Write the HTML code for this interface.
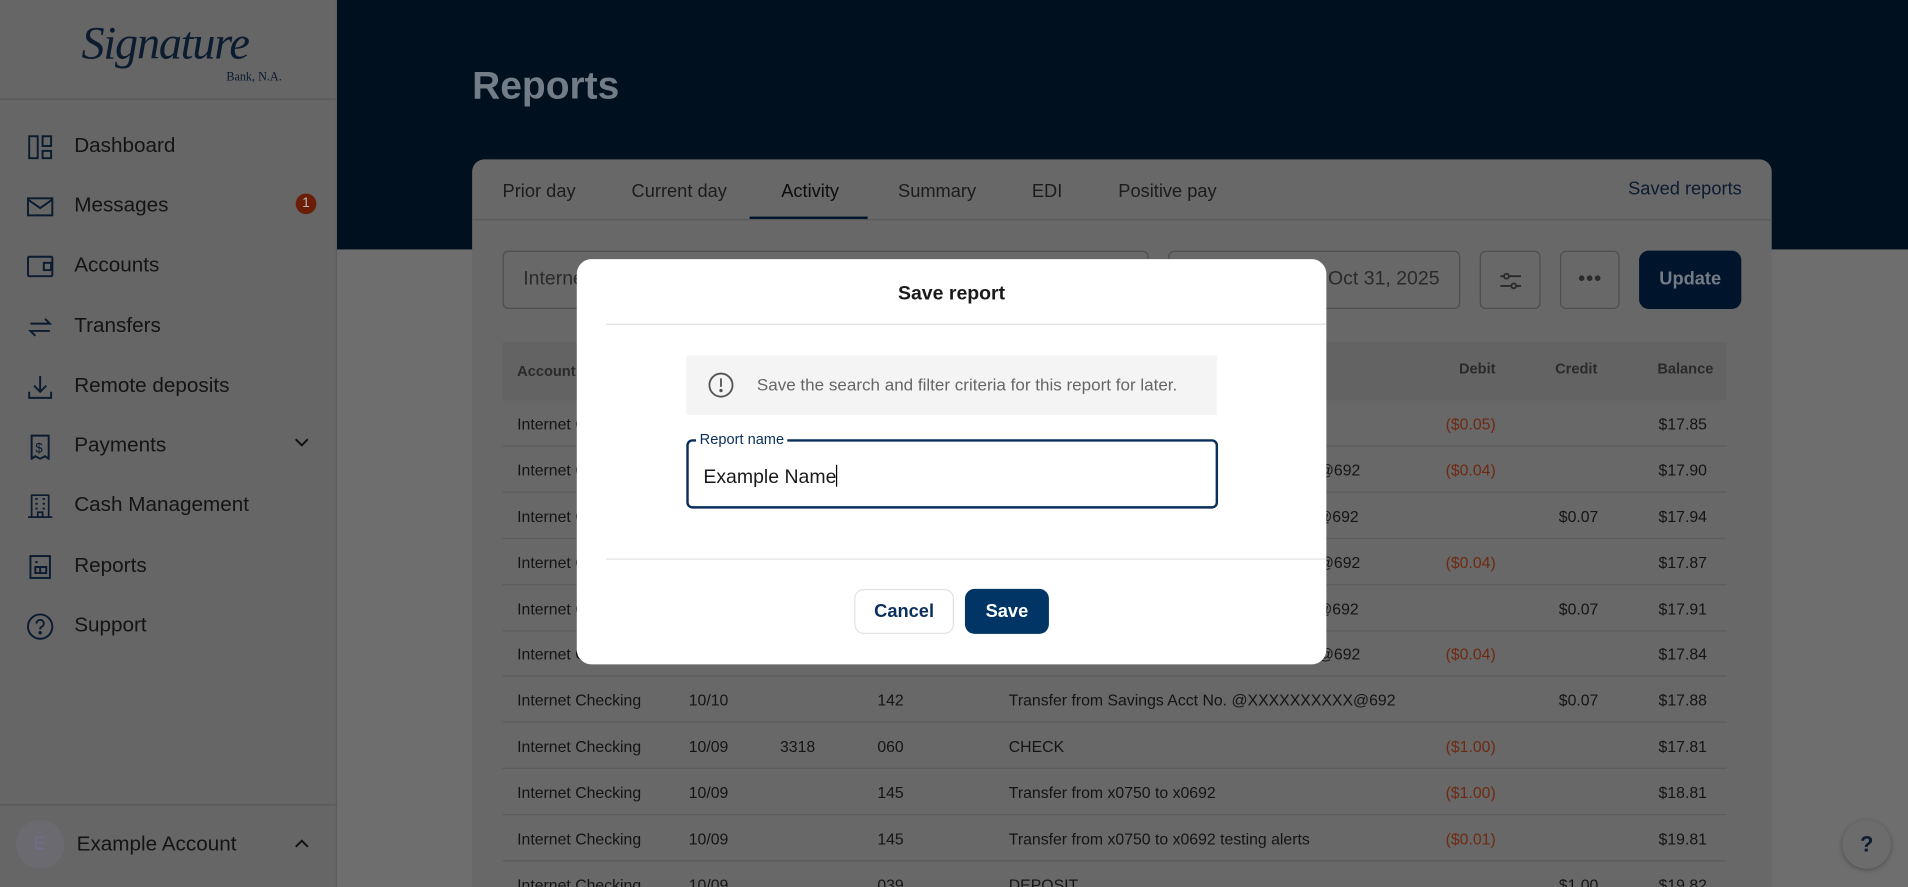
<!DOCTYPE html>
<html><head><meta charset="utf-8"><style>
*{box-sizing:border-box;margin:0;padding:0}
html,body{width:1908px;height:887px;overflow:hidden;background:#686868;font-family:"Liberation Sans",sans-serif}
#w{position:absolute;left:0;top:0;width:1568px;height:729px;transform:scale(1.21684,1.21673);transform-origin:0 0;overflow:hidden;background:#6e6e6e}
.a{position:absolute}
.side{left:0;top:0;width:277px;height:729px;background:#666;border-right:1px solid #5c5c5c}
.nav{position:absolute;left:0;width:277px;height:40px;font-size:17px;color:#141414}
.nav span{position:absolute;left:61px;top:11px}
.nav svg{position:absolute;left:22px;top:11px}
.hdr{left:277px;top:0;width:1291px;height:205px;background:#00101e}
.card{left:388px;top:131px;width:1068px;height:620px;background:#686868;border-radius:10px}
.tab{position:absolute;top:149px;font-size:15px;color:#1c1c1c}
.box{position:absolute;border:1px solid #4e4e4e;border-radius:5px}
.row{position:absolute;left:413px;width:1006px;height:38px;border-bottom:1px solid #5c5c5c;font-size:13px;color:#141414}
.row div{position:absolute;top:12px}
.red{color:#6e2a10}
</style></head><body><div id="w">
<div class="a side">
 <div class="a" style="left:67px;top:14px;font-family:'Liberation Serif',serif;font-style:italic;font-size:38px;color:#0b1b30;letter-spacing:-1px">Signature</div>
 <div class="a" style="left:186px;top:58px;font-family:'Liberation Serif',serif;font-size:10px;color:#0b1b30">Bank, N.A.</div>
 <div class="a" style="left:0;top:81px;width:277px;height:1px;background:#5a5a5a"></div>
 <div class="nav" style="top:99px"><svg width="22" height="22" viewBox="0 0 22 22" fill="none" stroke="#0b1b30" stroke-width="1.6"><rect x="2" y="2" width="7" height="18"/><rect x="13" y="2" width="7" height="8"/><rect x="13" y="14" width="7" height="6"/></svg><span>Dashboard</span></div>
 <div class="nav" style="top:148px"><svg width="22" height="22" viewBox="0 0 22 22" fill="none" stroke="#0b1b30" stroke-width="1.6"><rect x="1" y="4" width="20" height="14"/><path d="M1 5l10 7 10-7"/></svg><span>Messages</span><div class="a" style="left:243px;top:11px;width:17px;height:17px;border-radius:50%;background:#6a1e08;color:#bbb;font-size:11px;text-align:center;line-height:17px">1</div></div>
 <div class="nav" style="top:197px"><svg width="22" height="22" viewBox="0 0 22 22" fill="none" stroke="#0b1b30" stroke-width="1.6"><rect x="1" y="3" width="20" height="16" rx="1"/><rect x="14" y="8" width="6" height="6"/></svg><span>Accounts</span></div>
 <div class="nav" style="top:247px"><svg width="22" height="22" viewBox="0 0 22 22" fill="none" stroke="#0b1b30" stroke-width="1.6"><path d="M3 8h16l-4-4M19 14H3l4 4"/></svg><span>Transfers</span></div>
 <div class="nav" style="top:296px"><svg width="22" height="22" viewBox="0 0 22 22" fill="none" stroke="#0b1b30" stroke-width="1.6"><path d="M11 2v12M6 10l5 5 5-5M2 15v5h18v-5"/></svg><span>Remote deposits</span></div>
 <div class="nav" style="top:345px"><svg width="22" height="22" viewBox="0 0 22 22" fill="none" stroke="#0b1b30" stroke-width="1.6"><path d="M4 2h14v19l-3-2-4 2-4-2-3 2z"/><text x="7" y="16" font-size="11" fill="#0b1b30" stroke="none" font-family="Liberation Sans">$</text></svg><span>Payments</span><svg style="left:240px;top:10px" width="16" height="16" viewBox="0 0 16 16" fill="none" stroke="#111" stroke-width="1.6"><path d="M3 6l5 5 5-5"/></svg></div>
 <div class="nav" style="top:394px"><svg width="22" height="22" viewBox="0 0 22 22" fill="none" stroke="#0b1b30" stroke-width="1.4"><path d="M4 20V2h14v18M1 20h20M9 20v-4h4v4M7 5h2M13 5h2M7 9h2M13 9h2M7 13h2M13 13h2"/></svg><span>Cash Management</span></div>
 <div class="nav" style="top:444px"><svg width="22" height="22" viewBox="0 0 22 22" fill="none" stroke="#0b1b30" stroke-width="1.6"><rect x="3" y="2" width="16" height="18"/><path d="M7 7h2M7 11h9v5H7zM11 11v5"/></svg><span>Reports</span></div>
 <div class="nav" style="top:493px"><svg width="22" height="22" viewBox="0 0 22 22" fill="none" stroke="#0b1b30" stroke-width="1.6"><circle cx="11" cy="11" r="10"/><path d="M8 8.5a3 3 0 1 1 4 2.8c-1 .4-1 1-1 2"/><circle cx="11" cy="16" r=".6" fill="#0b1b30"/></svg><span>Support</span></div>
 <div class="a" style="left:0;top:661px;width:277px;height:1px;background:#5a5a5a"></div>
 <div class="a" style="left:13px;top:674px;width:40px;height:40px;border-radius:50%;background:#6a6a70;color:#6e6e88;font-size:15px;text-align:center;line-height:40px">E</div>
 <div class="a" style="left:63px;top:684px;font-size:17px;color:#141414">Example Account</div>
 <svg class="a" style="left:240px;top:686px" width="16" height="16" viewBox="0 0 16 16" fill="none" stroke="#111" stroke-width="1.6"><path d="M3 10l5-5 5 5"/></svg>
</div>
<div class="a hdr"></div>
<div class="a" style="left:388px;top:52px;font-size:32px;font-weight:bold;color:#737d88">Reports</div>
<div class="a card"></div>
<div class="tab" style="left:413px">Prior day</div>
<div class="tab" style="left:519px">Current day</div>
<div class="tab" style="left:642px;color:#0d0d0d">Activity</div>
<div class="tab" style="left:738px">Summary</div>
<div class="tab" style="left:848px">EDI</div>
<div class="tab" style="left:919px">Positive pay</div>
<div class="tab" style="left:1338px;top:147px;color:#0b1b30">Saved reports</div>
<div class="a" style="left:388px;top:180px;width:1068px;height:1px;background:#5a5a5a"></div>
<div class="a" style="left:616px;top:178px;width:97px;height:2px;background:#00142b"></div>
<div class="box" style="left:413px;top:206px;width:531px;height:48px"><div class="a" style="left:16px;top:14px;font-size:16px;color:#2a2a2a">Internet Checking</div></div>
<div class="box" style="left:960px;top:206px;width:240px;height:48px"><div class="a" style="right:16px;top:14px;font-size:16px;color:#2a2a2a">Oct 1, 2025 – Oct 31, 2025</div></div>
<div class="box" style="left:1216px;top:206px;width:50px;height:48px"><svg class="a" style="left:13px;top:13px" width="22" height="22" viewBox="0 0 22 22" fill="none" stroke="#2a2a2a" stroke-width="1.5"><path d="M3 7h3M10 7h10M3 15h9M16 15h4"/><circle cx="8" cy="7" r="2"/><circle cx="14" cy="15" r="2"/></svg></div>
<div class="box" style="left:1282px;top:206px;width:49px;height:48px"><div class="a" style="left:14px;top:14px;font-size:16px;color:#2a2a2a;font-weight:bold;letter-spacing:1px">•••</div></div>
<div class="a" style="left:1347px;top:206px;width:84px;height:48px;border-radius:8px;background:#00142b;color:#737b85;font-size:15px;font-weight:bold;text-align:center;line-height:48px">Update</div>
<div class="a" style="left:413px;top:281px;width:1006px;height:48px;background:#636363;font-size:12px;font-weight:bold;color:#2a2a2a">
 <div class="a" style="left:12px;top:17px">Account</div>
 <div class="a" style="left:786px;top:15px">Debit</div>
 <div class="a" style="left:865px;top:15px">Credit</div>
 <div class="a" style="left:949px;top:15px">Balance</div>
</div>
<div class="row" style="top:329px"><div style="left:12px">Internet Checking</div><div style="left:775px" class="red">($0.05)</div><div style="left:950px">$17.85</div></div>
<div class="row" style="top:367px"><div style="left:12px">Internet Checking</div><div style="left:670px">@692</div><div style="left:775px" class="red">($0.04)</div><div style="left:950px">$17.90</div></div>
<div class="row" style="top:405px"><div style="left:12px">Internet Checking</div><div style="left:660px">X@692</div><div style="left:868px">$0.07</div><div style="left:950px">$17.94</div></div>
<div class="row" style="top:443px"><div style="left:12px">Internet Checking</div><div style="left:670px">@692</div><div style="left:775px" class="red">($0.04)</div><div style="left:950px">$17.87</div></div>
<div class="row" style="top:481px"><div style="left:12px">Internet Checking</div><div style="left:660px">X@692</div><div style="left:868px">$0.07</div><div style="left:950px">$17.91</div></div>
<div class="row" style="top:518px"><div style="left:12px">Internet Checking</div><div style="left:670px">@692</div><div style="left:775px" class="red">($0.04)</div><div style="left:950px">$17.84</div></div>
<div class="row" style="top:556px"><div style="left:12px">Internet Checking</div><div style="left:153px">10/10</div><div style="left:308px">142</div><div style="left:416px">Transfer from Savings Acct No. @XXXXXXXXXX@692</div><div style="left:868px">$0.07</div><div style="left:950px">$17.88</div></div>
<div class="row" style="top:594px"><div style="left:12px">Internet Checking</div><div style="left:153px">10/09</div><div style="left:228px">3318</div><div style="left:308px">060</div><div style="left:416px">CHECK</div><div style="left:775px" class="red">($1.00)</div><div style="left:950px">$17.81</div></div>
<div class="row" style="top:632px"><div style="left:12px">Internet Checking</div><div style="left:153px">10/09</div><div style="left:308px">145</div><div style="left:416px">Transfer from x0750 to x0692</div><div style="left:775px" class="red">($1.00)</div><div style="left:950px">$18.81</div></div>
<div class="row" style="top:670px"><div style="left:12px">Internet Checking</div><div style="left:153px">10/09</div><div style="left:308px">145</div><div style="left:416px">Transfer from x0750 to x0692 testing alerts</div><div style="left:775px" class="red">($0.01)</div><div style="left:950px">$19.81</div></div>
<div class="row" style="top:708px"><div style="left:12px">Internet Checking</div><div style="left:153px">10/09</div><div style="left:308px">039</div><div style="left:416px">DEPOSIT</div><div style="left:868px">$1.00</div><div style="left:950px">$19.82</div></div>
<div class="a" style="left:1514px;top:674px;width:40px;height:40px;border-radius:50%;background:#6c6c6c;box-shadow:0 1px 4px rgba(0,0,0,.3);color:#0b1b30;font-size:18px;font-weight:bold;text-align:center;line-height:40px">?</div>
<div class="a" style="left:474px;top:213px;width:616px;height:333px;background:#fff;border-radius:12px">
 <div class="a" style="left:0;width:616px;top:20px;text-align:center;font-size:16px;font-weight:600;color:#1a1a1a">Save report</div>
 <div class="a" style="left:24px;top:53px;width:592px;height:1px;background:#e3e3e3"></div>
 <div class="a" style="left:90px;top:79px;width:436px;height:49px;background:#f4f4f4">
  <svg class="a" style="left:18px;top:14px" width="21" height="21" viewBox="0 0 21 21" fill="none" stroke="#555" stroke-width="1.5"><circle cx="10.5" cy="10.5" r="9.5"/><path d="M10.5 5v7"/><circle cx="10.5" cy="15" r=".6" fill="#555"/></svg>
  <div class="a" style="left:58px;top:16px;font-size:14px;color:#666">Save the search and filter criteria for this report for later.</div>
 </div>
 <div class="a" style="left:90px;top:148px;width:437px;height:57px;border:2px solid #0a2f5c;border-radius:5px">
  <div class="a" style="left:6px;top:-9px;background:#fff;padding:0 3px;font-size:12px;color:#0a2f5c">Report name</div>
  <div class="a" style="left:12px;top:19px;font-size:16px;color:#1a1a1a">Example Name<span style="display:inline-block;width:1px;height:18px;background:#000;vertical-align:-3px"></span></div>
 </div>
 <div class="a" style="left:24px;top:246px;width:592px;height:1px;background:#e3e3e3"></div>
 <div class="a" style="left:228px;top:271px;width:82px;height:37px;border:1px solid #e2e2e2;border-radius:8px;color:#0a2f5c;font-size:15px;font-weight:bold;text-align:center;line-height:35px">Cancel</div>
 <div class="a" style="left:319px;top:271px;width:69px;height:37px;background:#003566;border-radius:8px;color:#fff;font-size:15px;font-weight:bold;text-align:center;line-height:37px">Save</div>
</div>
</div></body></html>
